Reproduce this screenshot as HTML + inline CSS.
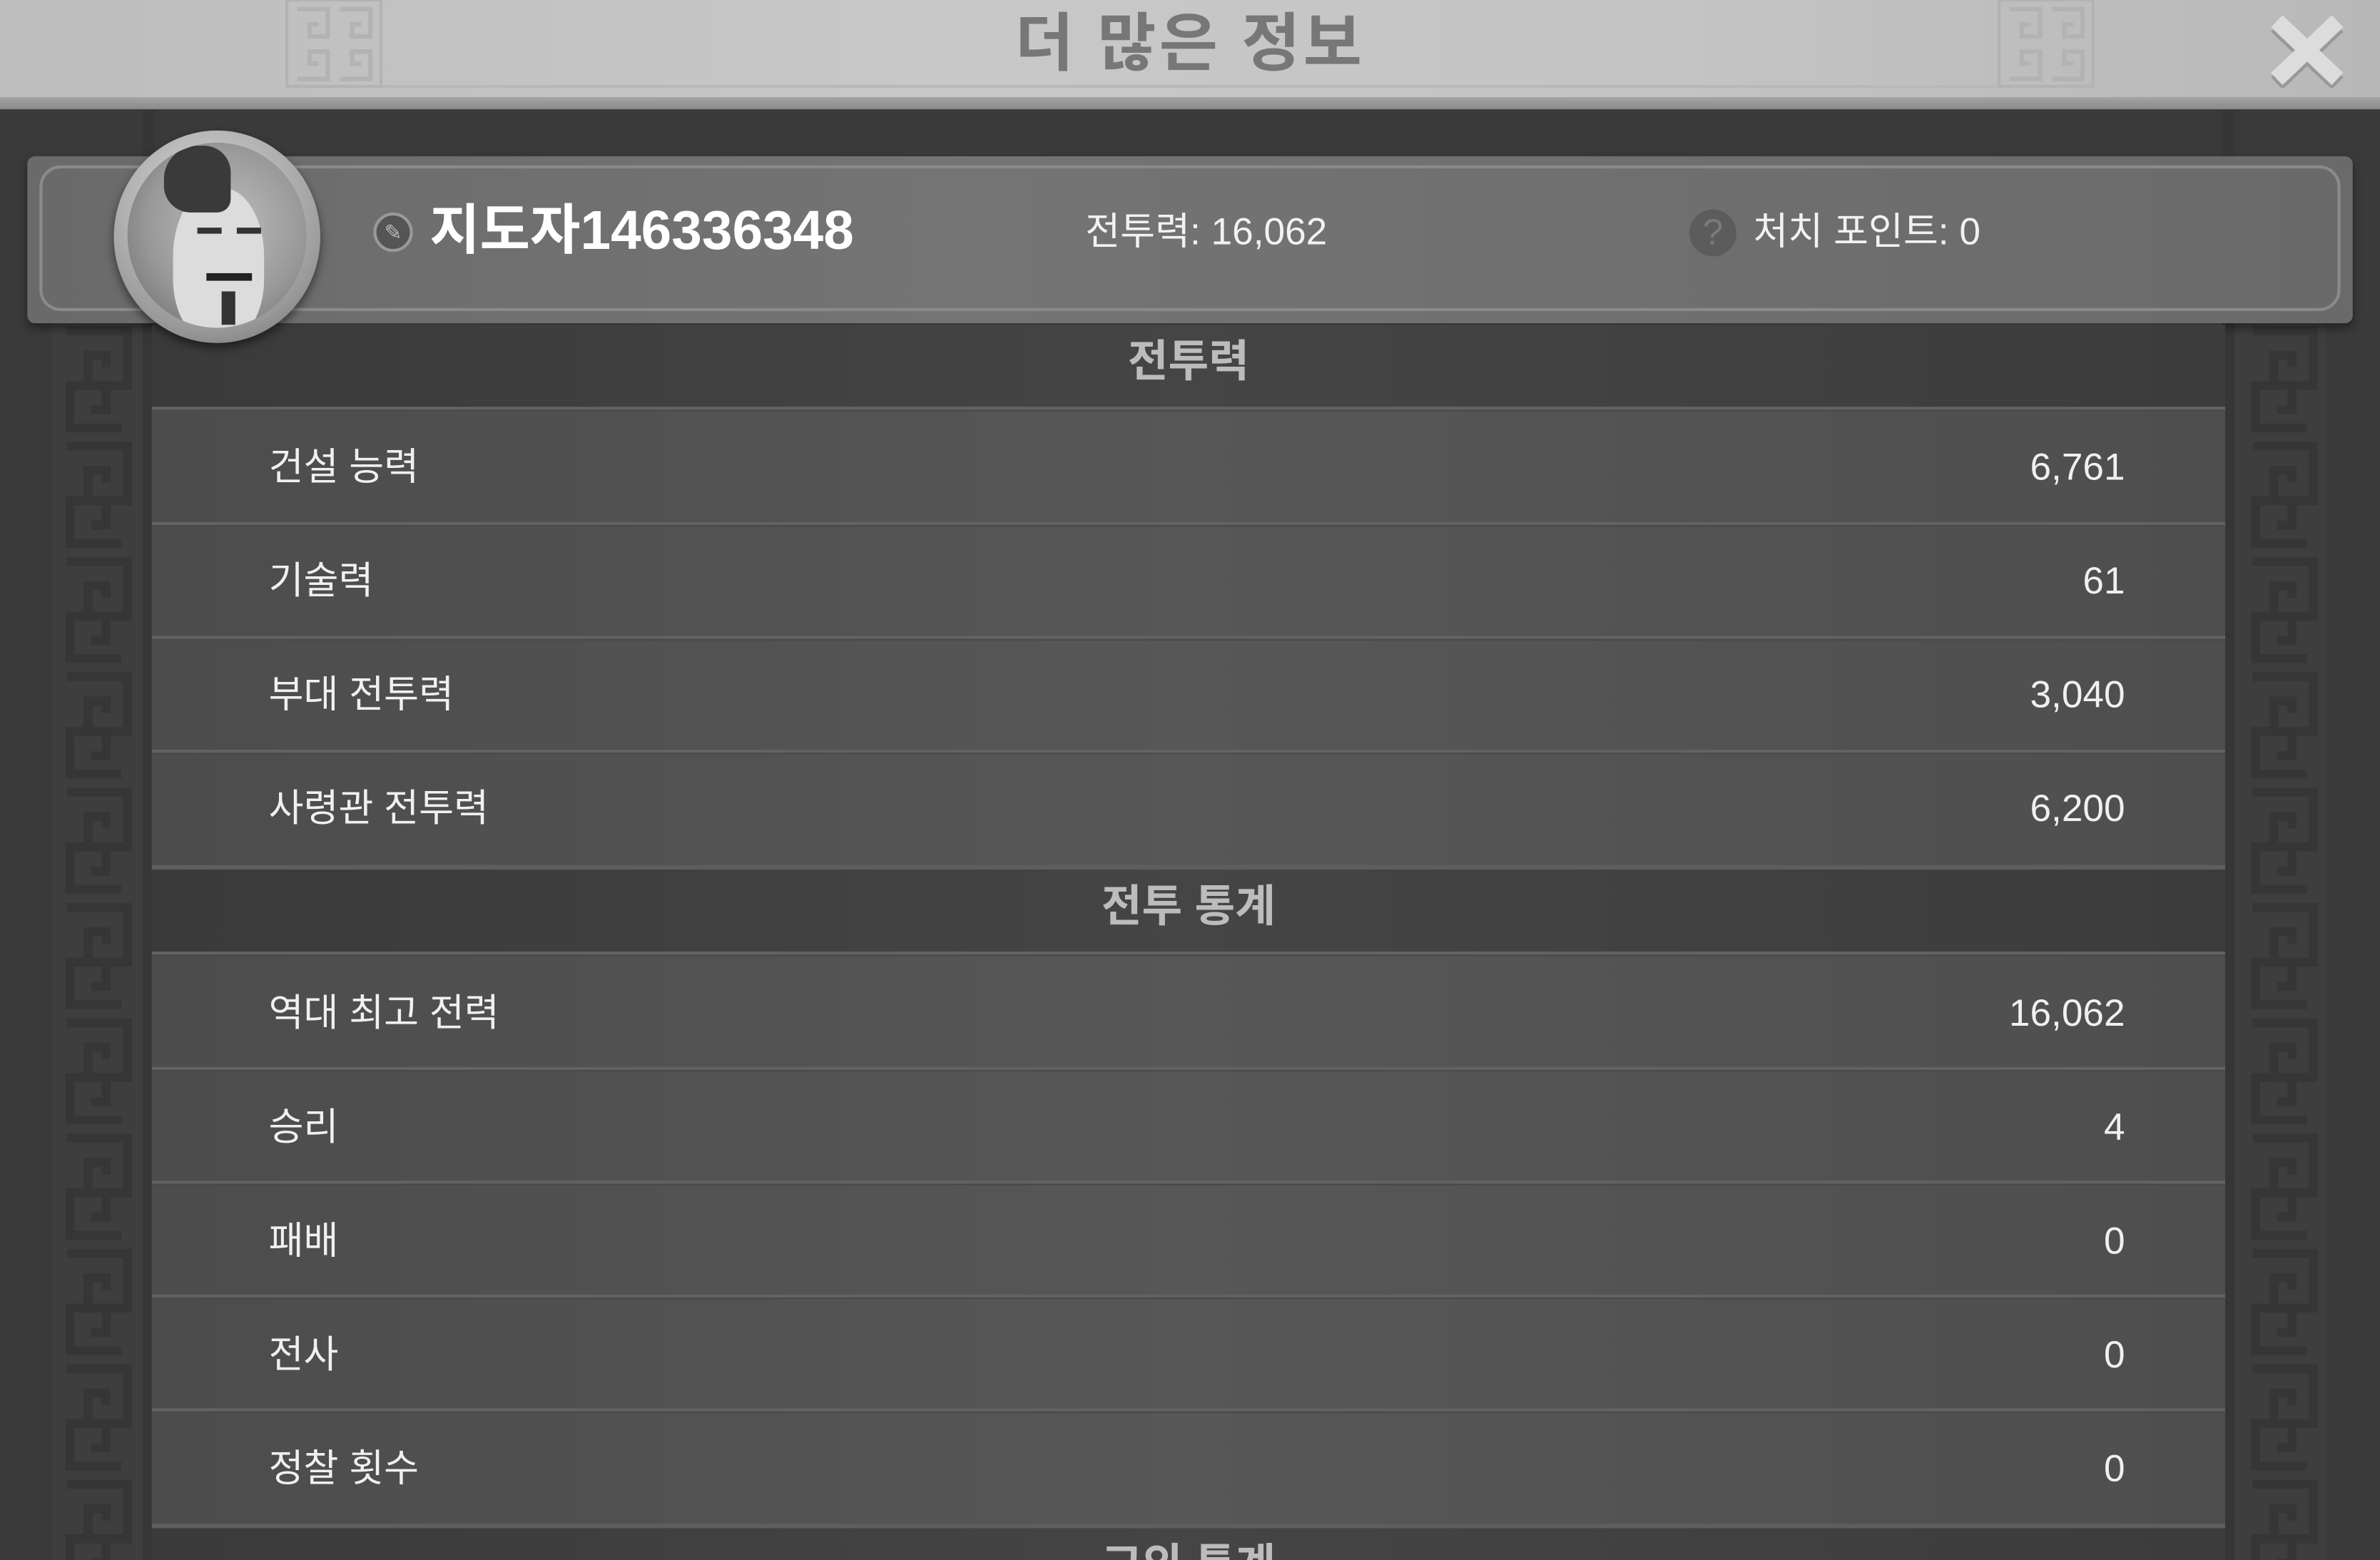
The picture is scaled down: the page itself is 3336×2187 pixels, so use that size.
<!DOCTYPE html>
<html><head><meta charset="utf-8">
<style>
html,body{margin:0;padding:0;width:3336px;height:2186px;overflow:hidden;background:#3a3a3a}
#w{position:absolute;left:0;top:0;width:1568px;height:1028px;transform:scale(2.12755);transform-origin:0 0;overflow:hidden;background:#3a3a3a;font-family:"Liberation Sans","Noto Sans CJK KR",sans-serif}
.a{position:absolute}
.row{position:absolute;left:100px;width:1366px;border-top:2px solid #626262;box-shadow:inset 0 1px 0 #484848;background:linear-gradient(90deg,#4c4c4c,#575757 50%,#4e4e4e)}
.lab{position:absolute;left:77px;color:#f0f0f0;font-size:25px;line-height:30px}
.val{position:absolute;right:66px;color:#f0f0f0;font-size:25px;line-height:30px}
.hd{position:absolute;left:100px;width:1366px;height:54px;background:linear-gradient(90deg,#3a3a3a,#454545 50%,#3c3c3c);color:#bcbcbc;font-weight:bold;font-size:29px;text-align:center;line-height:50px}
</style></head><body><div id="w">
<svg class="a" style="left:0;top:72px" width="1568" height="956">
<defs><pattern id="m" x="34" y="140" width="60" height="76" patternUnits="userSpaceOnUse">
<rect width="60" height="76" fill="#3e3e3e"/>
<path d="M10 6h40v36h-26v-20h12v8" stroke="#363636" stroke-width="6" fill="none"/>
<path d="M46 70h-34v-28h24v16h-10" stroke="#363636" stroke-width="6" fill="none"/>
</pattern></defs>
<rect x="34" y="140" width="60" height="820" fill="url(#m)"/>
<rect x="1472" y="140" width="60" height="820" fill="url(#m)"/>
<rect x="94" y="0" width="8" height="956" fill="#363636"/>
<rect x="1464" y="0" width="8" height="956" fill="#363636"/>
</svg>
<div class="a" style="left:102px;top:212px;width:1362px;height:816px;background:#505050"></div>
<div class="a" style="left:0;top:0;width:1568px;height:66px;background:linear-gradient(90deg,#bdbdbd,#c8c8c8 40%,#c4c4c4 70%,#b8b8b8)"></div>
<div class="a" style="left:0;top:64px;width:1568px;height:8px;background:linear-gradient(#a4a4a4,#8a8a8a)"></div>
<svg class="a" style="left:188px;top:0" width="64" height="58"><rect x="1" y="0" width="62" height="57" fill="none" stroke="#b3b3b3" stroke-width="2"/><path d="M8 6h20v18h-12v-8h6M36 6h20v18h-12v-8h6M8 52h20v-18h-12v8h6M36 52h20v-18h-12v8h6" stroke="#b3b3b3" stroke-width="3" fill="none"/></svg>
<svg class="a" style="left:1316px;top:0" width="64" height="58"><rect x="1" y="0" width="62" height="57" fill="none" stroke="#b3b3b3" stroke-width="2"/><path d="M8 6h20v18h-12v-8h6M36 6h20v18h-12v-8h6M8 52h20v-18h-12v8h6M36 52h20v-18h-12v8h6" stroke="#b3b3b3" stroke-width="3" fill="none"/></svg>
<div class="a" style="left:252px;top:56px;width:1064px;height:2px;background:#b8b8b8"></div>
<div class="a" style="left:0;top:4px;width:1568px;text-align:center;color:#777;font-weight:bold;font-size:42px;line-height:50px;letter-spacing:2px">더 많은 정보</div>
<svg class="a" style="left:1492px;top:8px" width="56" height="50"><path d="M8 6L48 44M48 6L8 44" stroke="#999" stroke-width="11" transform="translate(0,3)"/><path d="M8 6L48 44M48 6L8 44" stroke="#dcdcdc" stroke-width="11"/></svg>
<div class="a" style="left:18px;top:103px;width:1532px;height:110px;background:linear-gradient(90deg,#6a6a6a,#747474 40%,#6a6a6a);border-radius:5px;box-shadow:0 3px 6px rgba(0,0,0,.4)"></div>
<div class="a" style="left:26px;top:109px;width:1516px;height:96px;border:2px solid #8a8a8a;border-radius:14px;box-sizing:border-box"></div>
<div class="hd" style="top:214px">전투력</div>
<div class="row" style="top:268px;height:76px"><div class="lab" style="top:23px">건설 능력</div><div class="val" style="top:23px">6,761</div></div>
<div class="row" style="top:344px;height:74px"><div class="lab" style="top:22px">기술력</div><div class="val" style="top:22px">61</div></div>
<div class="row" style="top:419px;height:75px"><div class="lab" style="top:22px">부대 전투력</div><div class="val" style="top:22px">3,040</div></div>
<div class="row" style="top:494px;height:76px"><div class="lab" style="top:22px">사령관 전투력</div><div class="val" style="top:22px">6,200</div></div>
<div class="a" style="left:100px;top:570px;width:1366px;height:3px;background:#5e5e5e"></div>
<div class="hd" style="top:573px">전투 통계</div>
<div class="row" style="top:627px;height:76px"><div class="lab" style="top:24px">역대 최고 전력</div><div class="val" style="top:24px">16,062</div></div>
<div class="row" style="top:703px;height:75px"><div class="lab" style="top:23px">승리</div><div class="val" style="top:23px">4</div></div>
<div class="row" style="top:778px;height:75px"><div class="lab" style="top:23px">패배</div><div class="val" style="top:23px">0</div></div>
<div class="row" style="top:853px;height:75px"><div class="lab" style="top:23px">전사</div><div class="val" style="top:23px">0</div></div>
<div class="row" style="top:928px;height:76px"><div class="lab" style="top:23px">정찰 횟수</div><div class="val" style="top:23px">0</div></div>
<div class="a" style="left:100px;top:1004px;width:1366px;height:3px;background:#5e5e5e"></div>
<div class="hd" style="top:1007px">교외 통계</div>
<!-- avatar on top -->
<div class="a" style="left:75px;top:86px;width:136px;height:140px;border-radius:50%;background:radial-gradient(circle at 45% 35%,#e0e0e0,#999 70%,#666);box-shadow:0 3px 6px rgba(0,0,0,.5);z-index:5"></div>
<div class="a" style="left:84px;top:94px;width:118px;height:122px;border-radius:50%;background:radial-gradient(circle at 55% 45%,#bdbdbd,#999 55%,#666);overflow:hidden;z-index:6">
 <div class="a" style="left:30px;top:30px;width:60px;height:100px;background:#dcdcdc;border-radius:45% 45% 40% 40%"></div>
 <div class="a" style="left:24px;top:2px;width:44px;height:44px;background:#3a3a3a;border-radius:50% 40% 20% 40%"></div>
 <div class="a" style="left:46px;top:56px;width:16px;height:4px;background:#333"></div>
 <div class="a" style="left:72px;top:56px;width:16px;height:4px;background:#333"></div>
 <div class="a" style="left:52px;top:86px;width:30px;height:5px;background:#222"></div>
 <div class="a" style="left:62px;top:98px;width:9px;height:22px;background:#333"></div>
</div>
<div class="a" style="left:246px;top:140px;width:26px;height:26px;border-radius:50%;background:#555;border:2px solid #999;box-sizing:border-box;color:#bbb;font-size:14px;text-align:center;line-height:22px">✎</div>
<div class="a" style="left:283px;top:130px;color:#fff;font-weight:bold;font-size:36px;line-height:44px">지도자146336348</div>
<div class="a" style="left:715px;top:137px;color:#f2f2f2;font-size:25px;line-height:32px">전투력: 16,062</div>
<div class="a" style="left:1113px;top:138px;width:31px;height:31px;border-radius:50%;background:#5c5c5c;color:#7a7a7a;font-size:24px;text-align:center;line-height:31px">?</div>
<div class="a" style="left:1155px;top:137px;color:#f2f2f2;font-size:25px;line-height:32px">처치 포인트: 0</div>
</div></body></html>
